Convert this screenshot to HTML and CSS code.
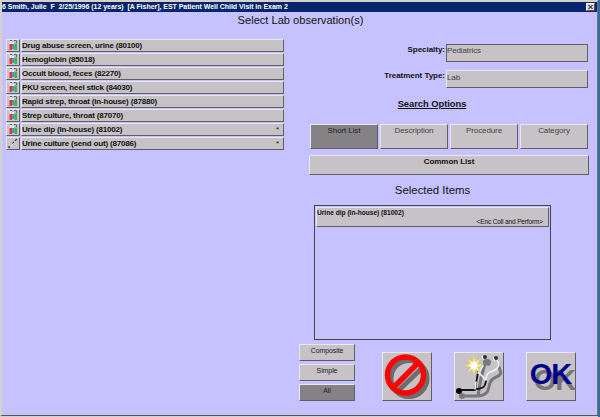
FILE: index.html
```html
<!DOCTYPE html>
<html lang="en">
<head>
<meta charset="utf-8">
<title>Select Lab observation(s)</title>
<link rel="stylesheet" href="styles.css">
</head>
<body>
<svg class="defs" width="0" height="0" aria-hidden="true">
  <symbol id="tubes" viewBox="0 0 12 11">
    <path d="M2.500 1h2v4h-2zM5 2h2v3h-2z" fill="#eceae8"/>
    <path d="M2.500 4h2.500v6H2.500z" fill="#e23a3a"/>
    <path d="M5 4h2.500v5H5z" fill="#5b8ac0"/>
    <path d="M7.500 3.500h2.500v6.500h-2.500z" fill="#30b850"/>
    <path d="M3 .5h2M7 .5h2.500M9.500 1v2" stroke="#59615f" fill="none"/>
  </symbol>
  <symbol id="swab" viewBox="0 0 12 11">
    <path d="M1.500 9.500l2-1 M5.500 5.500l1.500-1.500 M8 3l1.500-1.500" stroke="#333" stroke-width="1.200" fill="none"/>
    <path d="M3 9l4-4 3-3M2 7l2 2" stroke="#eee" stroke-width=".5" fill="none"/>
    <path d="M9 1.500h1M1.500 9h1.500" stroke="#444" stroke-width="1.500"/>
  </symbol>
</svg>
<div class="window">
  <header class="titlebar">
    <span class="caption">6 Smith, Julie&nbsp; F&nbsp; 2/25/1996 (12 years)&nbsp; [A Fisher], EST Patient Well Child Visit in Exam 2</span>
    <button class="close" aria-label="Close"><svg width="7" height="6" viewBox="0 0 7 6"><path d="M1.500 1l4 4M5.500 1l-4 4" stroke="#000"/></svg></button>
  </header>
  <h1>Select Lab observation(s)</h1>
  <main>
    <ul class="labs">
      <li><span class="icon"><svg><use href="#tubes"/></svg></span><span class="name"><b>Drug abuse screen, urine (80100)</b></span></li>
      <li><span class="icon"><svg><use href="#tubes"/></svg></span><span class="name"><b>Hemoglobin (85018)</b></span></li>
      <li><span class="icon"><svg><use href="#tubes"/></svg></span><span class="name"><b>Occult blood, feces (82270)</b></span></li>
      <li><span class="icon"><svg><use href="#tubes"/></svg></span><span class="name"><b>PKU screen, heel stick (84030)</b></span></li>
      <li><span class="icon"><svg><use href="#tubes"/></svg></span><span class="name"><b>Rapid strep, throat (in-house) (87880)</b></span></li>
      <li><span class="icon"><svg><use href="#tubes"/></svg></span><span class="name"><b>Strep culture, throat (87070)</b></span></li>
      <li><span class="icon"><svg><use href="#tubes"/></svg></span><span class="name"><b>Urine dip (In-house) (81002)</b><i>*</i></span></li>
      <li><span class="icon"><svg><use href="#swab"/></svg></span><span class="name"><b>Urine culture (send out) (87086)</b><i>*</i></span></li>
    </ul>
    <section class="panel">
      <div class="field"><label>Specialty:</label><span class="value sunken">Pediatrics</span></div>
      <div class="field"><label>Treatment Type:</label><span class="value">Lab</span></div>
      <h2 class="search">Search Options</h2>
      <div class="options">
        <button class="on">Short List</button><button>Description</button><button>Procedure</button><button>Category</button>
      </div>
      <button class="common">Common List</button>
      <h2 class="selected">Selected Items</h2>
      <div class="items">
        <div class="item"><b>Urine dip (In-house) (81002)</b><span>&lt;Enc Coll and Perform&gt;</span></div>
      </div>
      <footer>
        <div class="filters"><button>Composite</button><button>Simple</button><button class="on">All</button></div>
        <button class="action cancel" aria-label="Cancel">
          <svg width="48" height="47" viewBox="0 0 48 47" fill="none">
            <g stroke="#6d6d6d" stroke-width="5"><circle cx="26" cy="25.500" r="18"/><path d="M14 39L39 15"/></g>
            <g stroke="#fa0505" stroke-width="5.500"><circle cx="22.500" cy="22" r="18"/><path d="M10 35L35 10"/></g>
          </svg>
        </button>
        <button class="action tools" aria-label="Equipment">
          <svg width="48" height="47" viewBox="0 0 48 47" fill="none" stroke-linecap="round" stroke-linejoin="round">
            <g stroke="#777782" stroke-width="3"><path d="M8 43h15l3-18 4-14M23 43c12-1 10-8 12-13 2-7 8-4 11-10l-2-6M30 11h4"/></g>
            <g fill="#777782"><circle cx="7" cy="43" r="3"/><ellipse cx="32" cy="9" rx="4" ry="3"/></g>
            <path d="M4 37h16l3-18" stroke="#111" stroke-width="1.800"/>
            <path d="M22 36c7-1 8-2 9-8" stroke="#111" stroke-width="1.800"/>
            <path d="M20 36l1-7M23 20l5-7M24 20l7 7M31 26c1-8 4-6 9-9 5-3 4-7 2-10" stroke="#edf4ed" stroke-width="1.600"/>
            <circle cx="4" cy="38" r="3" fill="#000"/>
            <circle cx="30" cy="4" r="2" fill="#29332d"/><circle cx="41" cy="5" r="2" fill="#29332d"/>
            <path d="M27.500 3v3M38.500 5l1 3" stroke="#fff"/>
            <path d="M19 3l1.500 6 5-3-3.500 5 6 1.500-6 1.500 3.500 5-5-3-1.500 6-1.500-6-5 3 3.500-5-6-1.500 6-1.500-3.500-5 5 3z" fill="#fff9d2" stroke="#e9d83f" stroke-width=".7"/>
            <circle cx="19" cy="12.500" r="3.500" fill="#fff"/>
          </svg>
        </button>
        <button class="action ok" aria-label="OK"><span>OK</span></button>
      </footer>
    </section>
  </main>
</div>
</body>
</html>
```
FILE: styles.css
```css
* { box-sizing: border-box; }
body { margin: 0; width: 600px; height: 417px; overflow: hidden; background: #356aa5; font: 8px/10px "Liberation Sans", Arial, sans-serif; color: #111; }
h1, h2, ul { margin: 0; padding: 0; font-weight: normal; }
button { font: inherit; color: inherit; margin: 0; padding: 0; border-radius: 0; }
.defs { display: block; height: 0; }
.window { width: 598px; height: 416px; background: #c6c2ff; border: solid #d5d2ce; border-width: 2px 1px 1px 2px; border-right-color: #77736f; border-bottom-color: #55545c; box-shadow: 0 1px 0 #d5d2ce; }
.titlebar { height: 10px; background: #08246b; display: flex; justify-content: space-between; align-items: center; padding: 0 2px 0 0; color: #fff; }
.caption { font-weight: bold; font-size: 7px; line-height: 10px; white-space: pre; letter-spacing: -.035px; }
.close { width: 9px; height: 8px; background: #d6d3ce; border: 1px solid; border-color: #fff #555 #555 #fff; display: flex; align-items: center; justify-content: center; }
h1 { height: 27px; width: 597px; text-align: center; font-size: 11.1px; line-height: 16px; color: #111; }
main { display: flex; }
.labs { list-style: none; width: 278px; margin-left: 4px; display: flex; flex-direction: column; gap: 1px; }
.labs li { display: flex; gap: 1px; height: 13px; }
.labs .icon, .labs .name, .options button, .common, .item, .filters button, .action, .value { background: #c6c2c6; border: 1px solid; border-color: #e9e7ee #5f5e66 #5f5e66 #e9e7ee; }
.icon { width: 14px; }
.icon svg { display: block; width: 12px; height: 11px; }
.name { flex: 1; display: flex; justify-content: space-between; font-size: 8px; letter-spacing: -.18px; line-height: 11px; padding: 0 4px 0 0; }
.name i { font-style: normal; }
.panel { width: 312px; }
.field { display: flex; justify-content: flex-end; height: 18px; margin: 5px 8px 8px 0; }
.field + .field { margin-top: 0; margin-bottom: 0; }
.field label { font-weight: bold; font-size: 8px; line-height: 12px; margin-right: 1px; letter-spacing: -.03px; }
.value { width: 142px; color: #444; line-height: 13px; letter-spacing: -.12px; }
.value.sunken { border-color: #5f5e66; line-height: 12px; }
.search { font-size: 9.3px; line-height: 13px; margin: 10px 16px 0 0; text-align: center; font-weight: bold; text-decoration: underline; height: 26px; }
.options { display: flex; gap: 2px; padding-left: 26px; }
.options button { width: 68px; height: 25px; color: #444; padding-bottom: 11px; line-height: 10px; letter-spacing: -.1px; }
.options .on, .filters .on { background: #848284; color: #222; }
.common { display: block; width: 280px; height: 20px; margin: 6px 0 0 25px; font-weight: bold; padding-bottom: 6px; letter-spacing: -.05px; }
.selected { font-size: 11.4px; line-height: 13px; height: 30px; padding-top: 9px; margin-right: 15px; text-align: center; }
.items { width: 237px; height: 135px; margin-left: 30px; border: 1px solid #44434e; padding: 1px; }
.item { width: 233px; height: 20px; font-size: 6.6px; line-height: 9px; display: flex; flex-direction: column; }
.item span { align-self: flex-end; margin-right: 5px; letter-spacing: -.18px; }
footer { display: flex; padding: 4px 0 0 15px; align-items: flex-start; }
.filters { width: 56px; display: flex; flex-direction: column; gap: 3px; margin-right: 27px; }
.filters button { height: 17px; padding-bottom: 5px; font-size: 7px; line-height: 9px; color: #222; letter-spacing: -.1px; }
.action { width: 50px; height: 49px; margin: 8px 22px 0 0; flex: none; }
.action svg { display: block; }
.ok { margin-right: 0; padding: 0 1px 6px 0; font-size: 29px; line-height: 40px; font-weight: bold; color: #00008c; letter-spacing: -1px; text-shadow: 4px 6px 0 #777578; }
```
